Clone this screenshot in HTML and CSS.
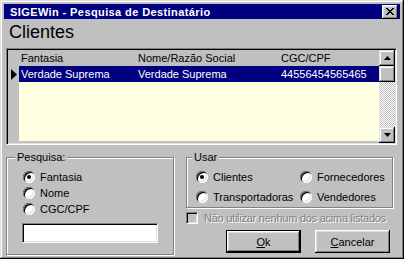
FILE: index.html
```html
<!DOCTYPE html>
<html lang="pt">
  <head>
    <meta charset="UTF-8" />
    <title>SIGEWin - Pesquisa de Destinatário</title>
    <link rel="stylesheet" href="styles.css">
  </head>
  <body>
    <div class="window">
      <div class="titlebar">
        <span class="title">SIGEWin - Pesquisa de Destinatário</span>
        <span class="close">
          <svg width="8" height="7" viewBox="0 0 8 7" shape-rendering="crispEdges">
            <rect x="0" y="0" width="2" height="1" />
            <rect x="6" y="0" width="2" height="1" />
            <rect x="1" y="1" width="2" height="1" />
            <rect x="5" y="1" width="2" height="1" />
            <rect x="2" y="2" width="4" height="1" />
            <rect x="3" y="3" width="2" height="1" />
            <rect x="2" y="4" width="4" height="1" />
            <rect x="1" y="5" width="2" height="1" />
            <rect x="5" y="5" width="2" height="1" />
            <rect x="0" y="6" width="2" height="1" />
            <rect x="6" y="6" width="2" height="1" />
          </svg>
        </span>
      </div>

      <div class="content">
        <h1 class="heading">Clientes</h1>

        <div class="grid">
          <div class="grid-table">
            <div class="cell indicator"></div>
            <div class="cell head">Fantasia</div>
            <div class="cell head">Nome/Razão Social</div>
            <div class="cell head">CGC/CPF</div>

            <div class="cell indicator">
              <svg width="6" height="11" viewBox="0 0 6 11"><polygon points="0,0 6,5.5 0,11" /></svg>
            </div>
            <div class="cell selected">Verdade Suprema</div>
            <div class="cell selected">Verdade Suprema</div>
            <div class="cell selected">44556454565465</div>

            <div class="cell indicator filler-side"></div>
            <div class="filler"></div>
          </div>
          <div class="scrollbar">
            <div class="scroll-btn">
              <svg width="7" height="4" viewBox="0 0 7 4"><polygon points="3.5,0 7,4 0,4" /></svg>
            </div>
            <div class="scroll-btn"></div>
            <div class="scroll-track"></div>
            <div class="scroll-btn">
              <svg width="7" height="4" viewBox="0 0 7 4"><polygon points="0,0 7,0 3.5,4" /></svg>
            </div>
          </div>
        </div>

        <div class="bottom">
          <fieldset class="group group-search">
            <legend>Pesquisa:</legend>
            <div class="radio-row"><span class="radio checked"></span>Fantasia</div>
            <div class="radio-row"><span class="radio"></span>Nome</div>
            <div class="radio-row"><span class="radio"></span>CGC/CPF</div>
            <div class="textbox"></div>
          </fieldset>

          <div class="right-col">
            <fieldset class="group group-use">
              <legend>Usar</legend>
              <div class="use-grid">
                <div class="radio-row"><span class="radio checked"></span>Clientes</div>
                <div class="radio-row"><span class="radio"></span>Fornecedores</div>
                <div class="radio-row"><span class="radio"></span>Transportadoras</div>
                <div class="radio-row"><span class="radio"></span>Vendedores</div>
              </div>
            </fieldset>

            <div class="check-row">
              <span class="checkbox"></span>
              <span class="disabled-text">Não utilizar nenhum dos acima listados</span>
            </div>

            <div class="buttons">
              <button class="btn btn-default"><u>O</u>k</button>
              <button class="btn"><u>C</u>ancelar</button>
            </div>
          </div>
        </div>
      </div>
    </div>
  </body>
</html>
```

FILE: styles.css
```css
body {
  margin: 0;
  font-family: "Liberation Sans", Arial, sans-serif;
  font-size: 11px;
  color: #000;
}
.window {
  width: 404px;
  height: 259px;
  box-sizing: border-box;
  padding: 4px;
  background-color: #c0c0c0;
  box-shadow: inset -1px -1px #000, inset 1px 1px #dfdfdf,
    inset -2px -2px #808080, inset 2px 2px #fff;
  display: flex;
  flex-direction: column;
}
.titlebar {
  height: 18px;
  background-color: #000080;
  color: #fff;
  display: flex;
  align-items: center;
  justify-content: space-between;
  padding: 0 2px 0 6px;
  font-weight: bold;
  letter-spacing: 0.4px;
}
.close {
  width: 16px;
  height: 14px;
  box-sizing: border-box;
  background-color: #c0c0c0;
  box-shadow: inset -1px -1px #000, inset 1px 1px #fff,
    inset -2px -2px #808080, inset 2px 2px #dfdfdf;
  display: flex;
  align-items: center;
  justify-content: center;
}
.close svg {
  fill: #000;
  margin-left: -1px;
}
.content {
  flex: 1;
  padding: 0 3px 0 2px;
  display: flex;
  flex-direction: column;
}
.heading {
  margin: 2px 0 5px;
  padding-left: 3px;
  font-size: 18px;
  line-height: 22px;
  font-weight: normal;
}
.grid {
  height: 97px;
  box-sizing: border-box;
  padding: 1px;
  border: 1px solid;
  border-color: #808080 #fff #fff #808080;
  box-shadow: inset 1px 1px #000, inset -1px -1px #dfdfdf;
  display: flex;
}
.grid-table {
  flex: 1;
  display: grid;
  grid-template-columns: 11px 117px 143px 1fr;
  grid-template-rows: 16px 16px 1fr 2px;
  background-color: #c0c0c0;
}
.cell {
  line-height: 16px;
  padding-left: 2px;
  white-space: nowrap;
}
.indicator {
  padding-left: 0;
  display: flex;
  align-items: center;
  justify-content: center;
}
.selected {
  background-color: #000080;
  color: #fff;
}
.selected:last-child {
  margin-right: 1px;
}
.filler-side {
  grid-row: 3 / 5;
}
.filler {
  grid-column: 2 / 5;
  background-color: #ffffe1;
}
.scrollbar {
  width: 16px;
  display: flex;
  flex-direction: column;
}
.scroll-btn {
  height: 16px;
  box-sizing: border-box;
  background-color: #c0c0c0;
  box-shadow: inset -1px -1px #000, inset 1px 1px #dfdfdf,
    inset -2px -2px #808080, inset 2px 2px #fff;
  display: flex;
  align-items: center;
  justify-content: center;
}
.scroll-track {
  flex: 1;
  background: repeating-conic-gradient(#c0c0c0 0 25%, #fff 0 50%) 0 0 / 2px 2px;
}
.bottom {
  margin-top: 6px;
  display: grid;
  grid-template-columns: 168px 207px;
  column-gap: 12px;
  align-items: start;
}
.group {
  margin: 0;
  min-width: 0;
  border: 1px solid #808080;
  box-shadow: 1px 1px 0 #fff, inset 1px 1px 0 #fff;
}
.group legend {
  padding: 0 2px;
  line-height: 13px;
  background-color: #c0c0c0;
}
.group-search {
  padding: 5px 0 11px 15px;
}
.group-search legend {
  margin-left: -7px;
}
.group-use {
  padding: 3px 0 0 9px;
}
.group-use legend {
  margin-left: -4px;
}
.radio-row {
  height: 16px;
  display: flex;
  align-items: center;
  gap: 5px;
  padding-left: 1px;
  white-space: nowrap;
}
.radio {
  position: relative;
  width: 12px;
  height: 12px;
  flex-shrink: 0;
  border-radius: 50%;
  background-color: #fff;
  box-shadow: inset 1px 1px #808080, inset -1px -1px #fff,
    inset 2px 2px #000, inset -2px -2px #dfdfdf;
}
.radio.checked::after {
  content: "";
  position: absolute;
  left: 4px;
  top: 4px;
  width: 4px;
  height: 4px;
  border-radius: 50%;
  background-color: #000;
}
.textbox {
  width: 136px;
  height: 20px;
  margin-top: 6px;
  box-sizing: border-box;
  background-color: #fff;
  border: 1px solid;
  border-color: #808080 #fff #fff #808080;
  box-shadow: inset 1px 1px #000, inset -1px -1px #dfdfdf;
}
.use-grid {
  display: grid;
  grid-template-columns: 104px 1fr;
  grid-auto-rows: 20px;
}
.use-grid .radio-row {
  height: 20px;
  padding-left: 0;
}
.right-col {
  display: flex;
  flex-direction: column;
}
.check-row {
  margin-top: 4px;
  height: 12px;
  display: flex;
  align-items: center;
  gap: 6px;
}
.checkbox {
  width: 12px;
  height: 12px;
  box-sizing: border-box;
  flex-shrink: 0;
  background-color: #c0c0c0;
  border: 1px solid;
  border-color: #808080 #fff #fff #808080;
  box-shadow: inset 1px 1px #000, inset -1px -1px #dfdfdf;
}
.disabled-text {
  color: #808080;
  text-shadow: 1px 1px 0 #fff;
  white-space: nowrap;
  letter-spacing: -0.25px;
}
.buttons {
  margin-top: 6px;
  padding-right: 3px;
  display: flex;
  justify-content: flex-end;
  gap: 14px;
}
.btn {
  width: 75px;
  height: 23px;
  padding: 0;
  border: none;
  background-color: #c0c0c0;
  font-family: "Liberation Sans", Arial, sans-serif;
  font-size: 11px;
  color: #000;
  box-shadow: inset -1px -1px #000, inset 1px 1px #fff,
    inset -2px -2px #808080, inset 2px 2px #dfdfdf;
}
.btn-default {
  box-shadow: inset 0 0 0 1px #000, inset -2px -2px #000, inset 2px 2px #fff,
    inset -3px -3px #808080, inset 3px 3px #dfdfdf;
}
```
